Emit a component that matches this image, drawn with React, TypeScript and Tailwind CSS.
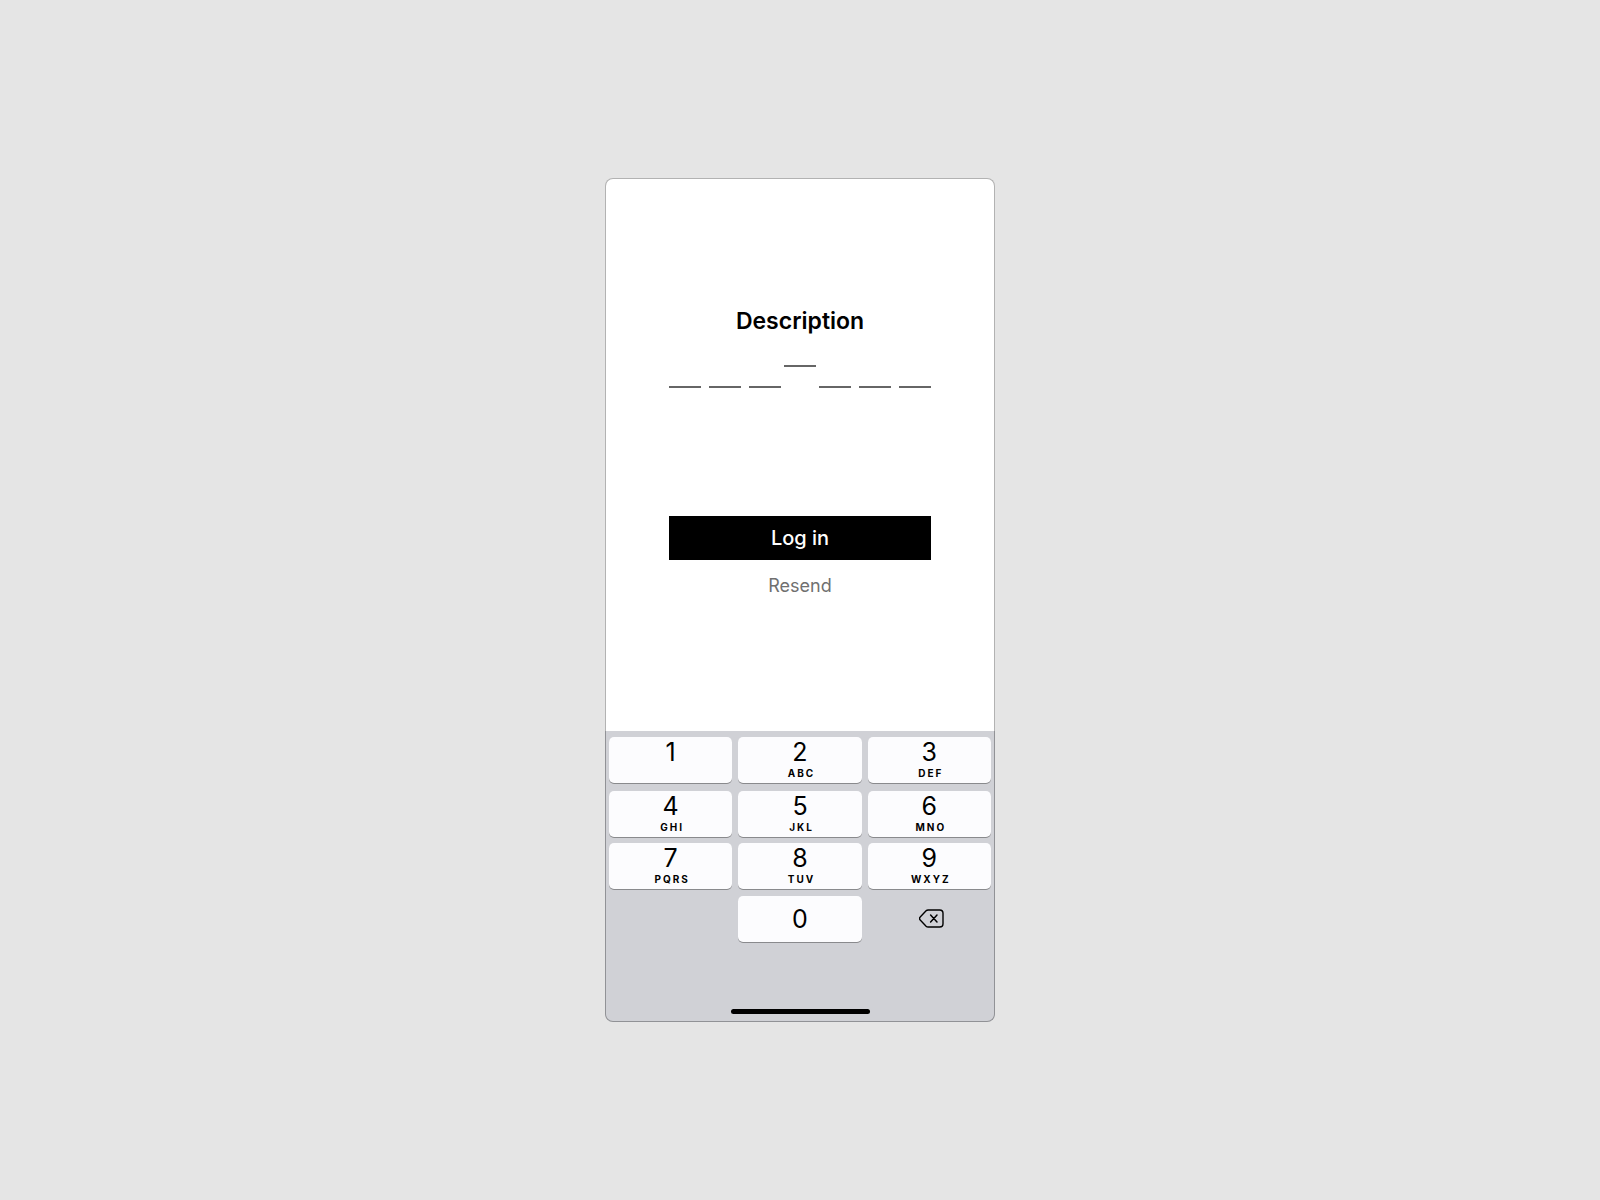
const rows = [
  {
    spacing: "mb-2",
    keys: [
      { digit: "1", letters: "" },
      { digit: "2", letters: "ABC" },
      { digit: "3", letters: "DEF" },
    ],
  },
  {
    spacing: "mb-1.5",
    keys: [
      { digit: "4", letters: "GHI" },
      { digit: "5", letters: "JKL" },
      { digit: "6", letters: "MNO" },
    ],
  },
  {
    spacing: "mb-[7px]",
    keys: [
      { digit: "7", letters: "PQRS" },
      { digit: "8", letters: "TUV" },
      { digit: "9", letters: "WXYZ" },
    ],
  },
];

const keyClass =
  "flex h-[46px] flex-col items-center rounded-[5px] bg-[#fcfcfe] text-black shadow-[0_1px_0_#898a8d]";

function CodeField({ position, raised = false }: { position: number; raised?: boolean }) {
  return (
    <input
      type="text"
      inputMode="numeric"
      maxLength={1}
      aria-label={`Digit ${position}`}
      className={
        raised
          ? "h-[21px] w-8 border-b-2 border-[#666666] text-center text-base outline-none"
          : "h-[42px] w-8 border-b-2 border-[#666666] text-center text-2xl outline-none"
      }
    />
  );
}

function Key({ digit, letters }: { digit: string; letters: string }) {
  return (
    <button type="button" className={keyClass}>
      <span className="text-[25px] leading-[30px]">{digit}</span>
      {letters && (
        <span className="pl-[3px] text-[10px] leading-3 font-bold tracking-[2px]">{letters}</span>
      )}
    </button>
  );
}

function DeleteIcon() {
  return (
    <svg width="25" height="19" viewBox="0 0 25 19" fill="none" stroke="black" aria-hidden="true">
      <path
        d="M9.2 1h11.5C22.9 1 24 2.1 24 4.2v10.6c0 2.1-1.1 3.2-3.3 3.2H9.2c-.9 0-1.5-.2-2.1-.8L1.2 10.9c-.9-.9-.9-1.9 0-2.8l5.9-6.3C7.700 1.200 8.300 1 9.200 1Z"
        strokeWidth="1.400"
      />
      <path d="M11.600 6.100l6.400 6.800M18 6.100l-6.400 6.800" strokeWidth="1.500" strokeLinecap="round" />
    </svg>
  );
}

export default function App() {
  return (
    <div className="flex min-h-screen items-center justify-center bg-[#e5e5e5] font-['Inter',sans-serif]">
      <main className="w-full max-w-[390px]">
        <form
          className="flex flex-col rounded-t-lg border border-b-0 border-[#b2b2b2] bg-white px-[63px] pt-[126px] pb-[133px]"
          onSubmit={(e) => e.preventDefault()}
        >
          <h1 className="text-center text-[23px] leading-8 font-semibold text-black">Description</h1>
          <div className="mt-[9px] flex items-start justify-between">
            <div className="flex gap-2">
              <CodeField position={1} />
              <CodeField position={2} />
              <CodeField position={3} />
            </div>
            <CodeField position={4} raised />
            <div className="flex gap-2">
              <CodeField position={5} />
              <CodeField position={6} />
              <CodeField position={7} />
            </div>
          </div>
          <button type="submit" className="mt-32 h-11 bg-black text-xl font-medium text-white">
            Log in
          </button>
          <button type="button" className="mt-3.5 self-center text-lg leading-6 text-[#707070]">
            Resend
          </button>
        </form>
        <section
          aria-label="Numeric keypad"
          className="rounded-b-lg border border-t-0 border-[#919296] bg-[#d0d1d6] px-[3px] pt-1.5 pb-[7px]"
        >
          {rows.map((row) => (
            <div key={row.keys[0].digit} className={`grid grid-cols-3 gap-1.5 ${row.spacing}`}>
              {row.keys.map((key) => (
                <Key key={key.digit} digit={key.digit} letters={key.letters} />
              ))}
            </div>
          ))}
          <div className="grid grid-cols-3 gap-1.5">
            <button type="button" className={`${keyClass} col-start-2 justify-center`}>
              <span className="text-[25px] leading-[30px]">0</span>
            </button>
            <button type="button" aria-label="Delete" className="flex items-center justify-center pb-0.5 pl-1">
              <DeleteIcon />
            </button>
          </div>
          <div className="mx-auto mt-[67px] h-[5px] w-[139px] rounded-full bg-black" />
        </section>
      </main>
    </div>
  );
}
